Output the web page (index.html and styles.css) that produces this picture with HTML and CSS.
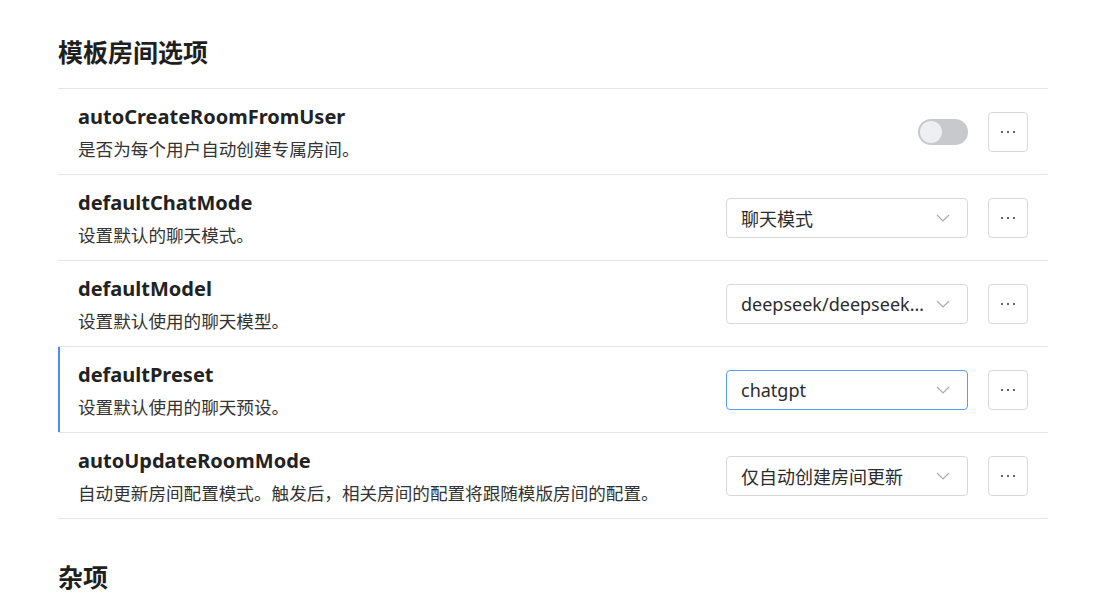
FILE: index.html
```html
<!DOCTYPE html>
<html lang="zh">
<head>
<meta charset="utf-8">
<title>模板房间选项</title>
<link rel="stylesheet" href="styles.css">
</head>
<body>
<div class="page">
  <h2 class="section-title">模板房间选项</h2>
  <div class="list">
    <div class="row">
      <div class="info">
        <div class="name">autoCreateRoomFromUser</div>
        <div class="desc">是否为每个用户自动创建专属房间。</div>
      </div>
      <div class="controls">
        <div class="switch"><span class="knob"></span></div>
        <button class="more" aria-label="更多"><svg viewBox="0 0 16 4" width="16" height="4"><circle cx="2" cy="2" r="1" fill="#333"/><circle cx="8" cy="2" r="1" fill="#333"/><circle cx="14" cy="2" r="1" fill="#333"/></svg></button>
      </div>
    </div>
    <div class="row">
      <div class="info">
        <div class="name">defaultChatMode</div>
        <div class="desc">设置默认的聊天模式。</div>
      </div>
      <div class="controls">
        <div class="select"><span class="value">聊天模式</span><svg class="chev" viewBox="0 0 14 8" width="14" height="8"><path d="M1 1l6 6 6-6" fill="none" stroke="#a8abb2" stroke-width="1.2"/></svg></div>
        <button class="more" aria-label="更多"><svg viewBox="0 0 16 4" width="16" height="4"><circle cx="2" cy="2" r="1" fill="#333"/><circle cx="8" cy="2" r="1" fill="#333"/><circle cx="14" cy="2" r="1" fill="#333"/></svg></button>
      </div>
    </div>
    <div class="row">
      <div class="info">
        <div class="name">defaultModel</div>
        <div class="desc">设置默认使用的聊天模型。</div>
      </div>
      <div class="controls">
        <div class="select"><span class="value">deepseek/deepseek-chat</span><svg class="chev" viewBox="0 0 14 8" width="14" height="8"><path d="M1 1l6 6 6-6" fill="none" stroke="#a8abb2" stroke-width="1.2"/></svg></div>
        <button class="more" aria-label="更多"><svg viewBox="0 0 16 4" width="16" height="4"><circle cx="2" cy="2" r="1" fill="#333"/><circle cx="8" cy="2" r="1" fill="#333"/><circle cx="14" cy="2" r="1" fill="#333"/></svg></button>
      </div>
    </div>
    <div class="row active">
      <div class="info">
        <div class="name">defaultPreset</div>
        <div class="desc">设置默认使用的聊天预设。</div>
      </div>
      <div class="controls">
        <div class="select focused"><span class="value">chatgpt</span><svg class="chev" viewBox="0 0 14 8" width="14" height="8"><path d="M1 1l6 6 6-6" fill="none" stroke="#a8abb2" stroke-width="1.2"/></svg></div>
        <button class="more" aria-label="更多"><svg viewBox="0 0 16 4" width="16" height="4"><circle cx="2" cy="2" r="1" fill="#333"/><circle cx="8" cy="2" r="1" fill="#333"/><circle cx="14" cy="2" r="1" fill="#333"/></svg></button>
      </div>
    </div>
    <div class="row">
      <div class="info">
        <div class="name">autoUpdateRoomMode</div>
        <div class="desc">自动更新房间配置模式。触发后，相关房间的配置将跟随模版房间的配置。</div>
      </div>
      <div class="controls">
        <div class="select"><span class="value">仅自动创建房间更新</span><svg class="chev" viewBox="0 0 14 8" width="14" height="8"><path d="M1 1l6 6 6-6" fill="none" stroke="#a8abb2" stroke-width="1.2"/></svg></div>
        <button class="more" aria-label="更多"><svg viewBox="0 0 16 4" width="16" height="4"><circle cx="2" cy="2" r="1" fill="#333"/><circle cx="8" cy="2" r="1" fill="#333"/><circle cx="14" cy="2" r="1" fill="#333"/></svg></button>
      </div>
    </div>
  </div>
  <h2 class="section-title second">杂项</h2>
</div>
</body>
</html>
```

FILE: styles.css
```css
html, body {
  margin: 0;
  padding: 0;
  background: #ffffff;
}
body {
  font-family: "Noto Sans", "Noto Sans CJK SC", sans-serif;
  color: #213547;
  overflow: hidden;
}
.page {
  width: 990px;
  padding: 0 59px 0 58px;
}
.section-title {
  margin: 0;
  font-size: 25px;
  font-weight: 700;
  color: #1f1f1f;
  line-height: 32px;
  padding-top: 36px;
  padding-bottom: 20px;
}
.section-title.second {
  padding-top: 42px;
}
.list {
  border-top: 1px solid #e2e6ec;
}
.row {
  display: flex;
  align-items: center;
  justify-content: space-between;
  height: 85px;
  padding: 0 20px;
  border-bottom: 1px solid #e2e6ec;
}
.row.active {
  box-shadow: inset 2px 0 0 #4c8ff3;
}
.info {
  display: flex;
  flex-direction: column;
  gap: 6px;
  padding-top: 1px;
}
.name {
  font-size: 20px;
  font-weight: 700;
  color: #222222;
  line-height: 28px;
}
.desc {
  font-size: 17.6px;
  color: #333333;
  line-height: 24px;
}
.controls {
  display: flex;
  align-items: center;
  gap: 20px;
}
.switch {
  width: 50px;
  height: 26px;
  border-radius: 13px;
  background: #c8c9cc;
  display: flex;
  align-items: center;
  padding: 0 2px;
  box-sizing: border-box;
}
.knob {
  width: 22px;
  height: 22px;
  border-radius: 50%;
  background: #eeeff1;
}
.more {
  width: 40px;
  height: 40px;
  border: 1px solid #d6d8dc;
  border-radius: 4px;
  background: #ffffff;
  padding: 0;
  box-sizing: border-box;
  display: flex;
  align-items: center;
  justify-content: center;
}
.more svg {
  display: block;
}
.select {
  width: 242px;
  height: 40px;
  box-sizing: border-box;
  border: 1px solid #d6d8dc;
  border-radius: 4px;
  display: flex;
  align-items: center;
  justify-content: space-between;
  padding: 0 17px 0 14px;
}
.select.focused {
  border-color: #5b9cf6;
}
.value {
  font-size: 18px;
  color: #2b2b2b;
  white-space: nowrap;
  overflow: hidden;
  text-overflow: ellipsis;
  max-width: 186px;
}
.chev {
  flex: none;
}
```
